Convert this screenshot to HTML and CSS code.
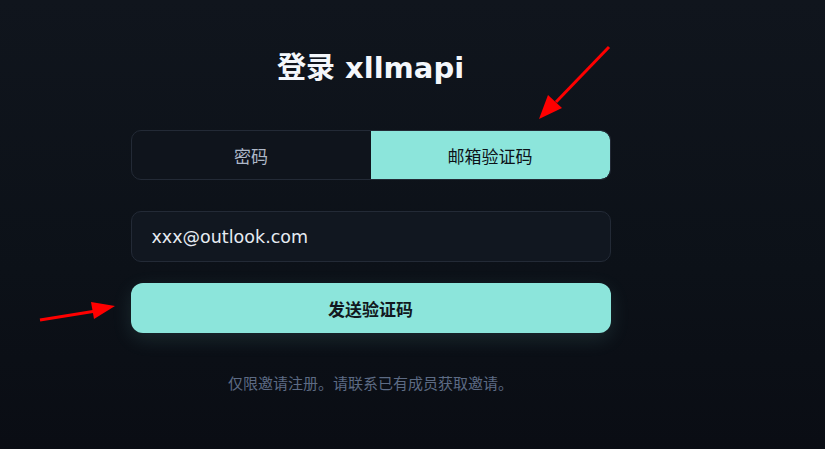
FILE: index.html
```html
<!DOCTYPE html>
<html lang="zh-CN">
<head>
<meta charset="UTF-8">
<meta name="viewport" content="width=device-width, initial-scale=1.0">
<title>登录 xllmapi</title>
<link rel="stylesheet" href="styles.css">
</head>
<body>

<div class="page">

<h1>登录 xllmapi</h1>

<div class="tabs">
<button class="tab">密码</button>
<button class="tab active">邮箱验证码</button>
</div>

<input class="email" type="text" value="xxx@outlook.com">

<button class="send">发送验证码</button>

<p class="note">仅限邀请注册。请联系已有成员获取邀请。</p>

</div>

<!-- annotation arrows -->
<svg class="marks" width="825" height="449" viewBox="0 0 825 449">
<line x1="609" y1="47" x2="556" y2="102" stroke="#ff0000" stroke-width="3"/>
<polygon points="539,119 548,95 562,108" fill="#ff0000"/>
<line x1="40" y1="320" x2="96" y2="311" stroke="#ff0000" stroke-width="3"/>
<polygon points="115,306 91,302 94,319" fill="#ff0000"/>
</svg>

</body>
</html>
```

FILE: styles.css
```css
html,body{height:100%;}

body{
    margin:0;
    font-family:"DejaVu Sans","Noto Sans CJK SC",sans-serif;
    background:linear-gradient(180deg,#10151d 0%,#0c1118 60%,#0a0d14 100%);
    color:#fff;
    overflow:hidden;
}

.page{
    width:480px;
    margin:0 auto;
    padding-top:48px;
    position:relative;
    left:-42px;
}

h1{
    margin:0 0 42px;
    font-size:29px;
    line-height:40px;
    text-align:center;
    color:#f4f7fb;
}

.tabs{
    display:flex;
    height:50px;
    border:1px solid #232a36;
    border-radius:10px;
    box-sizing:border-box;
    overflow:hidden;
    background:#0f141c;
}

.tab{
    flex:1;
    border:none;
    background:none;
    font-family:inherit;
    font-size:17px;
    color:#aeb8c8;
}

.tab.active{
    background:#8ce5db;
    color:#0d1218;
    border-radius:0 9px 9px 0;
}

.email{
    display:block;
    width:100%;
    height:51px;
    box-sizing:border-box;
    margin-top:31px;
    padding:0 20px;
    border:1px solid #232a36;
    border-radius:10px;
    background:#111720;
    color:#e6ebf2;
    font-family:inherit;
    font-size:17.5px;
    outline:none;
}

.send{
    display:block;
    width:100%;
    height:50px;
    margin-top:21px;
    border:none;
    border-radius:12px;
    background:#8ce5db;
    color:#121820;
    font-family:inherit;
    font-size:17px;
    font-weight:bold;
    box-shadow:0 6px 20px rgba(140,229,219,0.12);
}

.note{
    margin:39px 0 0;
    text-align:center;
    font-size:15px;
    color:#5d6b84;
}

.marks{
    position:absolute;
    left:0;
    top:0;
    pointer-events:none;
}
```
